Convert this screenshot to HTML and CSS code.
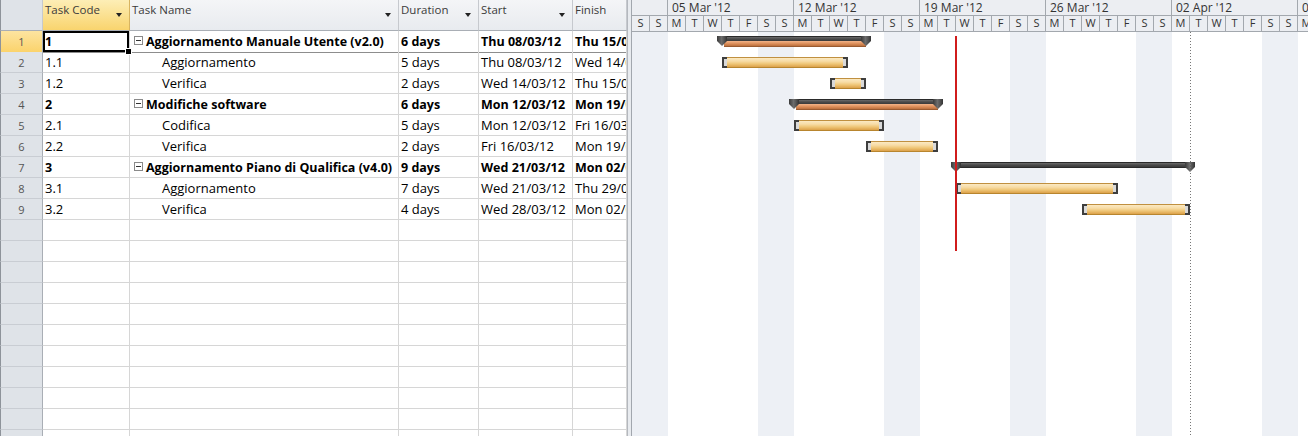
FILE: index.html
```html
<!DOCTYPE html>
<html>
<head>
<meta charset="utf-8">
<link rel="stylesheet" href="styles.css">
</head>
<body>
<div class="app">
  <div class="sheet">
    <div class="row hdr">
      <div class="c rn"></div>
      <div class="c hsel">Task Code<i class="dd"></i></div>
      <div class="c">Task Name<i class="dd"></i></div>
      <div class="c">Duration<i class="dd"></i></div>
      <div class="c">Start<i class="dd"></i></div>
      <div class="c">Finish</div>
    </div>
    <div class="row sum active">
      <div class="c rn rsel">1</div>
      <div class="c csel">1</div>
      <div class="c name"><span class="mbox"></span>Aggiornamento Manuale Utente (v2.0)</div>
      <div class="c">6 days</div>
      <div class="c">Thu 08/03/12</div>
      <div class="c">Thu 15/03/12</div>
    </div>
    <div class="row">
      <div class="c rn">2</div><div class="c">1.1</div>
      <div class="c name sub">Aggiornamento</div>
      <div class="c">5 days</div><div class="c">Thu 08/03/12</div><div class="c">Wed 14/03/12</div>
    </div>
    <div class="row">
      <div class="c rn">3</div><div class="c">1.2</div>
      <div class="c name sub">Verifica</div>
      <div class="c">2 days</div><div class="c">Wed 14/03/12</div><div class="c">Thu 15/03/12</div>
    </div>
    <div class="row sum">
      <div class="c rn">4</div><div class="c">2</div>
      <div class="c name"><span class="mbox"></span>Modifiche software</div>
      <div class="c">6 days</div><div class="c">Mon 12/03/12</div><div class="c">Mon 19/03/12</div>
    </div>
    <div class="row">
      <div class="c rn">5</div><div class="c">2.1</div>
      <div class="c name sub">Codifica</div>
      <div class="c">5 days</div><div class="c">Mon 12/03/12</div><div class="c">Fri 16/03/12</div>
    </div>
    <div class="row">
      <div class="c rn">6</div><div class="c">2.2</div>
      <div class="c name sub">Verifica</div>
      <div class="c">2 days</div><div class="c">Fri 16/03/12</div><div class="c">Mon 19/03/12</div>
    </div>
    <div class="row sum">
      <div class="c rn">7</div><div class="c">3</div>
      <div class="c name"><span class="mbox"></span>Aggiornamento Piano di Qualifica (v4.0)</div>
      <div class="c">9 days</div><div class="c">Wed 21/03/12</div><div class="c">Mon 02/04/12</div>
    </div>
    <div class="row">
      <div class="c rn">8</div><div class="c">3.1</div>
      <div class="c name sub">Aggiornamento</div>
      <div class="c">7 days</div><div class="c">Wed 21/03/12</div><div class="c">Thu 29/03/12</div>
    </div>
    <div class="row">
      <div class="c rn">9</div><div class="c">3.2</div>
      <div class="c name sub">Verifica</div>
      <div class="c">4 days</div><div class="c">Wed 28/03/12</div><div class="c">Mon 02/04/12</div>
    </div>
    <div class="row"><div class="c rn"></div><div class="c"></div><div class="c"></div><div class="c"></div><div class="c"></div><div class="c"></div></div>
    <div class="row"><div class="c rn"></div><div class="c"></div><div class="c"></div><div class="c"></div><div class="c"></div><div class="c"></div></div>
    <div class="row"><div class="c rn"></div><div class="c"></div><div class="c"></div><div class="c"></div><div class="c"></div><div class="c"></div></div>
    <div class="row"><div class="c rn"></div><div class="c"></div><div class="c"></div><div class="c"></div><div class="c"></div><div class="c"></div></div>
    <div class="row"><div class="c rn"></div><div class="c"></div><div class="c"></div><div class="c"></div><div class="c"></div><div class="c"></div></div>
    <div class="row"><div class="c rn"></div><div class="c"></div><div class="c"></div><div class="c"></div><div class="c"></div><div class="c"></div></div>
    <div class="row"><div class="c rn"></div><div class="c"></div><div class="c"></div><div class="c"></div><div class="c"></div><div class="c"></div></div>
    <div class="row"><div class="c rn"></div><div class="c"></div><div class="c"></div><div class="c"></div><div class="c"></div><div class="c"></div></div>
    <div class="row"><div class="c rn"></div><div class="c"></div><div class="c"></div><div class="c"></div><div class="c"></div><div class="c"></div></div>
    <div class="row"><div class="c rn"></div><div class="c"></div><div class="c"></div><div class="c"></div><div class="c"></div><div class="c"></div></div>
    <div class="row"><div class="c rn"></div><div class="c"></div><div class="c"></div><div class="c"></div><div class="c"></div><div class="c"></div></div>
  </div>
  <div class="split"></div>
  <div class="gantt">
    <div class="tier1">
      <div class="wk first"></div>
      <div class="wk">05 Mar '12</div>
      <div class="wk">12 Mar '12</div>
      <div class="wk">19 Mar '12</div>
      <div class="wk">26 Mar '12</div>
      <div class="wk">02 Apr '12</div>
      <div class="wk">09 Apr '12</div>
    </div>
    <div class="tier2">
      <span>S</span><span>S</span>
      <span>M</span><span>T</span><span>W</span><span>T</span><span>F</span><span>S</span><span>S</span>
      <span>M</span><span>T</span><span>W</span><span>T</span><span>F</span><span>S</span><span>S</span>
      <span>M</span><span>T</span><span>W</span><span>T</span><span>F</span><span>S</span><span>S</span>
      <span>M</span><span>T</span><span>W</span><span>T</span><span>F</span><span>S</span><span>S</span>
      <span>M</span><span>T</span><span>W</span><span>T</span><span>F</span><span>S</span><span>S</span>
      <span>M</span>
    </div>
    <div class="body">
      <div class="grow"><div class="sbar" style="margin-left:85px;width:154px"><div class="sline"></div><div class="sprog"></div></div></div>
      <div class="grow"><div class="tbar" style="margin-left:90px;width:126px"></div></div>
      <div class="grow"><div class="tbar" style="margin-left:198px;width:36px"></div></div>
      <div class="grow"><div class="sbar" style="margin-left:157px;width:154px"><div class="sline"></div><div class="sprog"></div></div></div>
      <div class="grow"><div class="tbar" style="margin-left:162px;width:90px"></div></div>
      <div class="grow"><div class="tbar" style="margin-left:234px;width:72px"></div></div>
      <div class="grow"><div class="sbar" style="margin-left:319px;width:244px"><div class="sline"></div></div></div>
      <div class="grow"><div class="tbar" style="margin-left:324px;width:162px"></div></div>
      <div class="grow"><div class="tbar" style="margin-left:450px;width:108px"></div></div>
      <div class="finish" style="left:558px"></div>
      <div class="today" style="left:323px"></div>
    </div>
  </div>
</div>
</body>
</html>
```

FILE: styles.css
```css
html, body {
  margin: 0;
  padding: 0;
  background: #fff;
}
.app {
  display: flex;
  width: 1308px;
  height: 436px;
  overflow: hidden;
  font-family: "Open Sans", "Noto Sans", sans-serif;
  font-size: 13px;
  color: #000;
}
.sheet {
  width: 627px;
  flex: none;
  display: flex;
  flex-direction: column;
}
.row {
  display: grid;
  grid-template-columns: 43px 87px 269px 80px 94px 54px;
  height: 21px;
  flex: none;
}
.c {
  box-sizing: border-box;
  border-right: 1px solid #d6d6d6;
  border-bottom: 1px solid #d6d6d6;
  padding-left: 2px;
  line-height: 21px;
  white-space: nowrap;
  overflow: hidden;
  position: relative;
}
.rn {
  background: #dfe3e8;
  border-right: 1px solid #a9aeb5;
  border-bottom: 1px solid #c9cdd3;
  border-left: 1px solid #8e939a;
  text-align: center;
  padding-left: 0;
  color: #555;
  font-size: 11px;
  font-weight: 400;
}
.hdr {
  height: 31px;
}
.hdr .c {
  background: linear-gradient(#f4f5f7, #e8ebef);
  border-right: 1px solid #c6c9ce;
  border-bottom: 1px solid #a9aeb5;
  line-height: 18px;
  padding-top: 1px;
  font-size: 11.5px;
  color: #3b3b3b;
}
.hdr .rn {
  background: #dfe3e8;
}
.hdr .hsel {
  background: linear-gradient(#fdeeb6, #f9d46e);
  border-right: 1px solid #d8b460;
}
.dd {
  position: absolute;
  right: 7px;
  top: 13px;
  width: 0;
  height: 0;
  border-left: 3.5px solid transparent;
  border-right: 3.5px solid transparent;
  border-top: 4px solid #222;
}
.sum {
  font-weight: 700;
  font-size: 12.5px;
}
.active .c {
  border-bottom-color: #8d8d8d;
}
.rsel {
  background: linear-gradient(#fde4a0, #fbd36c);
  border-bottom-color: #d9b45a !important;
}
.csel {
  box-shadow: inset 0 0 0 2px #000;
  overflow: visible;
}
.csel::after {
  content: "";
  position: absolute;
  right: -3px;
  bottom: -3px;
  width: 5px;
  height: 5px;
  background: #000;
  border: 1px solid #fff;
  z-index: 2;
}
.name {
  padding-left: 4px;
  display: flex;
  align-items: center;
}
.name.sub {
  padding-left: 32px;
}
.mbox {
  width: 7px;
  height: 7px;
  border: 1px solid #8a8a8a;
  background: #fff;
  margin-right: 3px;
  margin-top: -2px;
  position: relative;
  flex: none;
}
.mbox::after {
  content: "";
  position: absolute;
  left: 1px;
  right: 1px;
  top: 3px;
  height: 1px;
  background: #333;
}
.split {
  width: 5px;
  flex: none;
  box-sizing: border-box;
  background: #e8ebef;
  border-left: 1px solid #b4b8be;
  border-right: 1px solid #a2a7ae;
}
.gantt {
  flex: 1;
  display: flex;
  flex-direction: column;
  overflow: hidden;
  min-width: 0;
  font-size: 12px;
}
.tier1, .tier2 {
  display: flex;
  flex: none;
  height: 15px;
  background: #eceef2;
  border-bottom: 1px solid #a3a8ae;
  white-space: nowrap;
  color: #333;
}
.wk {
  flex: none;
  width: 126px;
  box-sizing: border-box;
  border-right: 1px solid #a3a8ae;
  padding-left: 4px;
  line-height: 15px;
  font-size: 12px;
}
.wk.first {
  width: 36px;
}
.tier2 span {
  flex: none;
  width: 18px;
  box-sizing: border-box;
  border-right: 1px solid #a3a8ae;
  text-align: center;
  font-size: 11px;
  line-height: 14px;
}
.body {
  flex: 1;
  position: relative;
  background: repeating-linear-gradient(90deg, #edf0f5 0 36px, #fff 36px 126px);
}
.grow {
  height: 21px;
  box-sizing: border-box;
  padding-top: 4px;
}
.sbar {
  position: relative;
  height: 10px;
}
.sline {
  position: absolute;
  left: 5px;
  right: 5px;
  top: 0;
  height: 6px;
  box-sizing: border-box;
  border: 1px solid #2a2a2a;
  background: linear-gradient(#6b6b6b, #4a4a4a 50%, #3a3a3a);
}
.sprog {
  position: absolute;
  left: 7px;
  right: 5px;
  top: 5px;
  height: 6px;
  background: linear-gradient(#f3b489, #d98a55 60%, #b9703f);
  border-bottom: 1px solid #9a5a30;
  box-sizing: border-box;
}
.sbar::before, .sbar::after {
  content: "";
  position: absolute;
  top: 0;
  width: 10px;
  height: 10px;
  background: linear-gradient(90deg, #3a3a3a, #6c6c6c 45%, #555 70%, #333);
  clip-path: polygon(0 0, 100% 0, 100% 50%, 50% 100%, 0 50%);
  z-index: 1;
}
.sbar::before { left: 0; }
.sbar::after { right: 0; }
.tbar {
  position: relative;
  height: 11px;
  box-sizing: border-box;
  border-top: 1px solid #c09040;
  border-bottom: 1px solid #b8852e;
  background: linear-gradient(#fbe9c2, #f7dca6 35%, #efc677 65%, #dca14a);
}
.tbar::before, .tbar::after {
  content: "";
  position: absolute;
  top: -1px;
  width: 3px;
  height: 7px;
  border: 2px solid #3e3e3e;
  background: #d9d9d9;
}
.tbar::before { left: 0; border-right: 0; }
.tbar::after { right: 0; border-left: 0; }
.today {
  position: absolute;
  top: 4px;
  width: 2px;
  height: 215px;
  background: #d01c1c;
  z-index: 3;
}
.finish {
  position: absolute;
  top: 0;
  bottom: 0;
  width: 1px;
  background: repeating-linear-gradient(#777 0 1px, transparent 1px 3px);
  z-index: 2;
}
```
